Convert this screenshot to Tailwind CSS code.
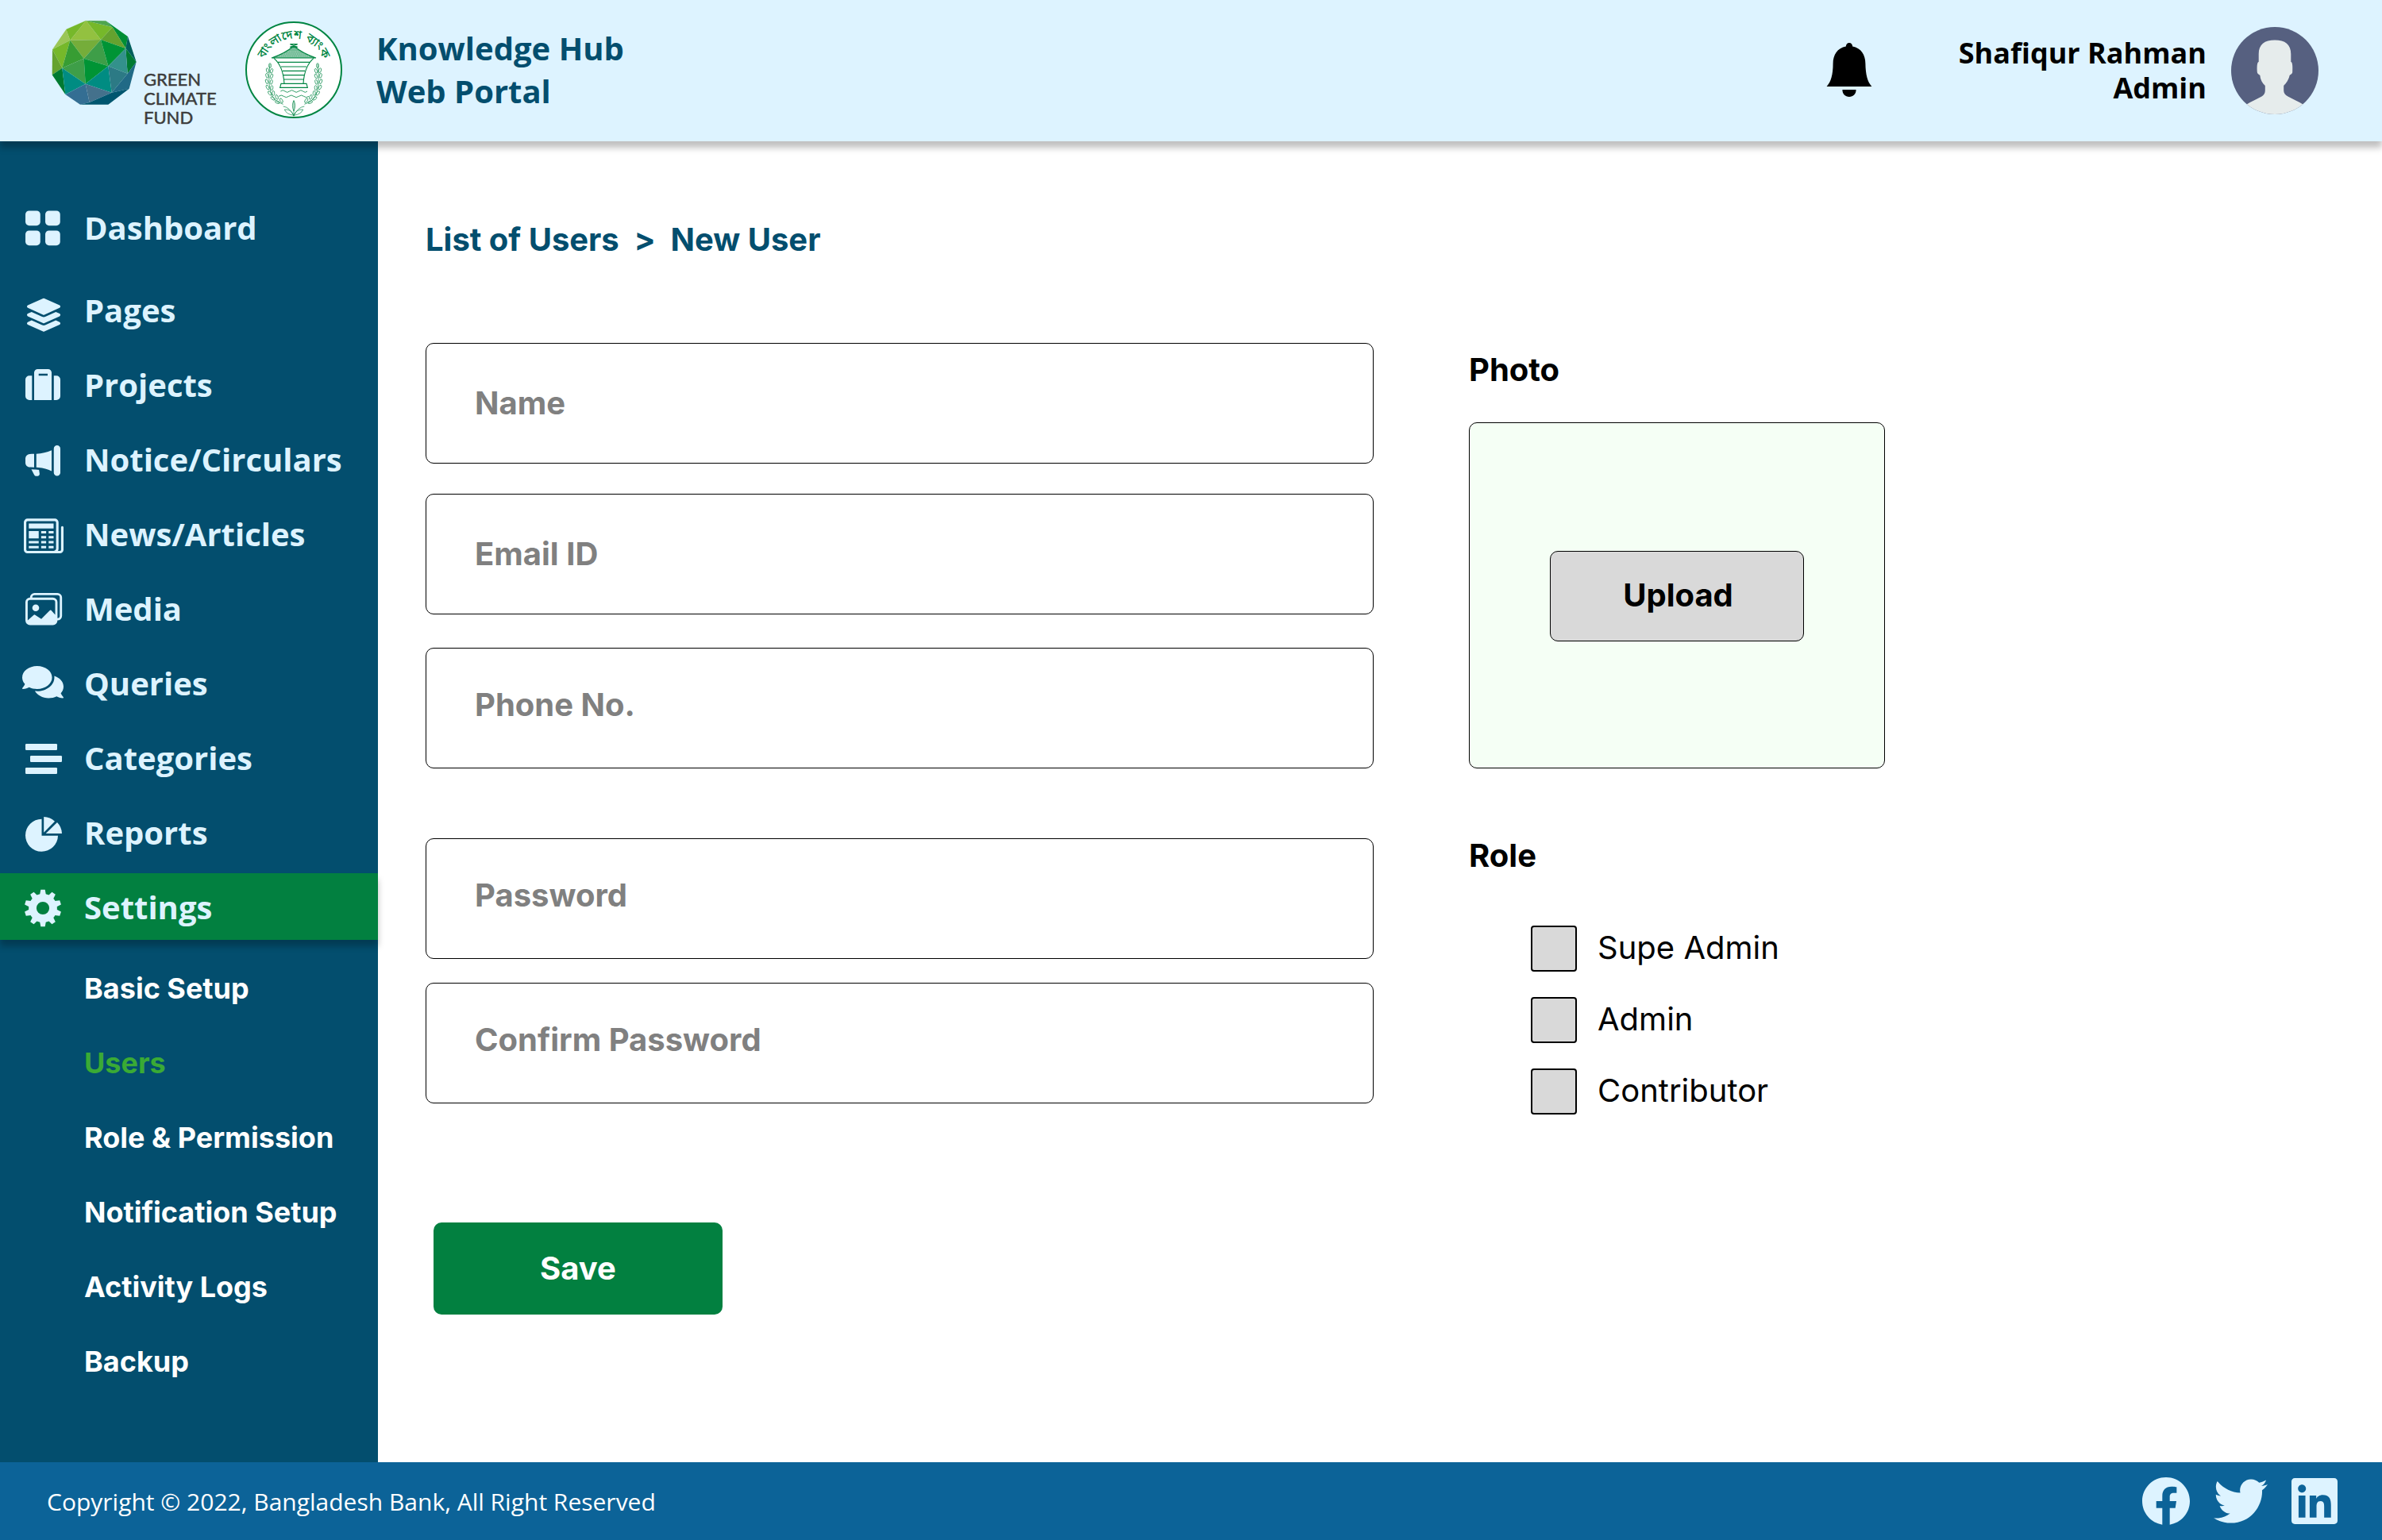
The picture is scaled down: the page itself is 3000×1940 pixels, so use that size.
<!DOCTYPE html>
<html lang="en">
<head>
<meta charset="utf-8">
<title>Knowledge Hub Web Portal</title>
<script src="https://cdn.jsdelivr.net/npm/@tailwindcss/browser@4"></script>
</head>
<body class="w-[3000px] h-[1940px] overflow-hidden bg-white font-['Inter',sans-serif] flex flex-col">

<header class="relative z-20 h-[178px] shrink-0 bg-[#ddf3ff] shadow-[0_8px_8px_rgba(0,0,0,0.25)] flex items-start">
  <!-- Green Climate Fund logo -->
  <div class="flex pl-[65px] pt-[25px] w-[308px]">
    <svg class="w-[108px] h-[108px] shrink-0" viewBox="75 75 324 324">
      <g stroke-width="0.6">
        <path fill="#76b82a" stroke="#76b82a" d="M130 111L205 78L145 152z"/>
        <path fill="#9bc657" d="M78 187L130 111L145 152z"/>
        <path fill="#93c140" d="M145 152L205 78L261 150z"/>
        <path fill="#76b82a" d="M205 78L305 103L261 150z"/>
        <path fill="#4fa54e" d="M205 78L280 79L305 103z"/>
        <path fill="#008e34" d="M280 79L363 138L355 183L305 103z"/>
        <path fill="#65a22f" d="M261 150L305 103L355 183z"/>
        <path fill="#75ad3a" d="M145 152L261 150L197 221z"/>
        <path fill="#76b82a" d="M78 187L145 152L115 257z"/>
        <path fill="#65a22f" d="M78 187L115 257L77 283z"/>
        <path fill="#379d33" d="M145 152L197 221L115 257z"/>
        <path fill="#3e9e48" d="M261 150L289 250L197 221z"/>
        <path fill="#009435" d="M261 150L355 183L289 250z"/>
        <path fill="#005f5c" d="M363 138L395 234L355 183z"/>
        <path fill="#007a31" d="M355 183L395 234L362 278z"/>
        <path fill="#33918b" d="M355 183L362 278L289 250z"/>
        <path fill="#3e9e48" d="M197 221L203 317L115 257z"/>
        <path fill="#009435" d="M197 221L289 250L203 317z"/>
        <path fill="#007a31" d="M115 257L127 357L77 283z"/>
        <path fill="#008c82" d="M115 257L203 317L127 357z"/>
        <path fill="#008c82" d="M289 250L302 350L203 317z"/>
        <path fill="#2c7a85" d="M289 250L362 278L302 350z"/>
        <path fill="#216a86" d="M395 234L368 335L302 350L362 278z"/>
        <path fill="#346e93" d="M127 357L203 317L218 387L183 395z"/>
        <path fill="#44718c" d="M203 317L302 350L218 387z"/>
        <path fill="#00566f" d="M302 350L368 335L289 395L183 395L218 387z"/>
      </g>
    </svg>
    <div class="ml-[8px] mt-[63px] font-['Lato',sans-serif] text-[22px] leading-[24px] text-[#3c3c3b] [-webkit-text-stroke:0.5px_#3c3c3b]">GREEN<br>CLIMATE<br>FUND</div>
  </div>

  <!-- Bangladesh Bank seal -->
  <svg class="w-[124px] h-[124px] mt-[26px] shrink-0" viewBox="804 78 372 372">
    <defs>
      <path id="arc" d="M872 264A118 118 0 0 1 1108 264"/>
      <g id="leaf"><ellipse rx="4.5" ry="9" fill="none" stroke="#008542" stroke-width="2"/></g>
    </defs>
    <circle cx="990" cy="264" r="180" fill="#fff" stroke="#008542" stroke-width="6"/>
    <text fill="#008542" font-size="46" font-weight="500" font-family="'Noto Sans Bengali','Noto Sans',sans-serif"><textPath href="#arc" startOffset="50%" text-anchor="middle" textLength="290" lengthAdjust="spacingAndGlyphs">বাংলাদেশ ব্যাংক</textPath></text>
    <g fill="none" stroke="#008542" stroke-width="3.4">
      <path d="M976 167H1004L976 178H1004L976 167M1004 167L976 178"/>
      <path fill="#008542" fill-opacity=".55" d="M990 174Q955 203 906 219H1074Q1025 203 990 174z"/>
      <path stroke="#fff" stroke-width="1.6" stroke-dasharray="3 4" d="M968 196H1012M950 204H1030M932 212H1048"/>
      <path d="M915 220Q950 250 954 316M1065 220Q1030 250 1026 316"/>
      <path d="M930 235H1050M942 252H1038M948 268H1032M951 284H1029M953 300H1027M942 316H1038L1042 331H938z"/>
      <path stroke-width="2.4" d="M940 345q9 -8 17 0t17 0t17 0t17 0t17 0t16 0M933 364q10 -8 19 0t19 0t19 0t19 0t19 0t19 0"/>
      <path stroke-width="2" d="M900 242Q888 330 912 370Q926 388 950 394M1080 242Q1092 330 1068 370Q1054 388 1030 394M990 380V440M990 438Q975 405 950 402M990 438Q1005 405 1030 402M990 436Q962 432 955 414Q980 412 990 436M990 436Q1018 432 1025 414Q1000 412 990 436M990 420Q980 398 990 380Q1000 398 990 420"/>
    </g>
    <use href="#leaf" transform="translate(900 248)"/><use href="#leaf" transform="translate(891 266) rotate(-15)"/><use href="#leaf" transform="translate(906 268) rotate(20)"/>
    <use href="#leaf" transform="translate(889 286) rotate(-15)"/><use href="#leaf" transform="translate(906 288) rotate(20)"/><use href="#leaf" transform="translate(888 308) rotate(-20)"/><use href="#leaf" transform="translate(905 310) rotate(15)"/>
    <use href="#leaf" transform="translate(891 330) rotate(-25)"/><use href="#leaf" transform="translate(907 332) rotate(5)"/><use href="#leaf" transform="translate(899 352) rotate(-35)"/><use href="#leaf" transform="translate(913 352) rotate(-5)"/>
    <use href="#leaf" transform="translate(911 372) rotate(-55)"/><use href="#leaf" transform="translate(926 367) rotate(-20)"/><use href="#leaf" transform="translate(928 386) rotate(-70)"/><use href="#leaf" transform="translate(943 380) rotate(-30)"/>
    <use href="#leaf" transform="translate(1080 248)"/><use href="#leaf" transform="translate(1089 266) rotate(15)"/><use href="#leaf" transform="translate(1074 268) rotate(-20)"/>
    <use href="#leaf" transform="translate(1091 286) rotate(15)"/><use href="#leaf" transform="translate(1074 288) rotate(-20)"/><use href="#leaf" transform="translate(1092 308) rotate(20)"/><use href="#leaf" transform="translate(1075 310) rotate(-15)"/>
    <use href="#leaf" transform="translate(1089 330) rotate(25)"/><use href="#leaf" transform="translate(1073 332) rotate(-5)"/><use href="#leaf" transform="translate(1081 352) rotate(35)"/><use href="#leaf" transform="translate(1067 352) rotate(5)"/>
    <use href="#leaf" transform="translate(1069 372) rotate(55)"/><use href="#leaf" transform="translate(1054 367) rotate(20)"/><use href="#leaf" transform="translate(1052 386) rotate(70)"/><use href="#leaf" transform="translate(1037 380) rotate(30)"/>
  </svg>

  <h1 class="ml-[42px] mt-[34px] font-['Open_Sans',sans-serif] font-bold text-[40px] leading-[54px] text-[#034e6e] whitespace-nowrap">Knowledge Hub<br>Web Portal</h1>

  <div class="ml-auto flex items-start pr-[80px]">
    <svg class="w-[58px] h-[70px] mt-[53px]" viewBox="0 0 58 70">
      <path d="M29 1C26.500 1 25 3 24.800 5.400C14 7.500 8.600 16 8.600 27C8.600 41 6 50 .6 56H57.400C52 50 49.600 41 49.400 27C49.400 16 44 7.500 33.200 5.400C33 3 31.500 1 29 1zM20.400 60H37.600C37.600 65.500 34 69 29 69S20.400 65.500 20.400 60z"/>
    </svg>
    <div class="ml-[101px] w-[320px] mt-[45px] text-right font-['Open_Sans',sans-serif] font-bold text-[36px] leading-[44px] text-black whitespace-nowrap">Shafiqur Rahman<br>Admin</div>
    <svg class="w-[110px] h-[110px] ml-[31px] mt-[34px]" viewBox="0 0 110 110">
      <defs><clipPath id="av"><circle cx="55" cy="55" r="55"/></clipPath></defs>
      <g clip-path="url(#av)">
        <rect width="110" height="110" fill="#566080"/>
        <path fill="#e6ecec" d="M34.700 44V34C34.700 22 42 16.500 55 16.500S75.300 22 75.300 34V44C77.500 44 77.500 51 77.200 57C76.500 60 74 59.500 73.500 61.500C72 67.500 69 71 66.200 74V80C66.200 83 68 85.500 71.500 87.500C79 91.500 85 94 90.500 97.500L98 110H12L19.500 97.500C25 94 31 91.500 38.500 87.500C41.500 85.500 42.800 83 42.800 80V74C40 71 37 67.500 36.500 61.500C36 59.500 33.500 60 32.800 57C32.300 51 32.500 44 34.700 44z"/>
      </g>
    </svg>
  </div>
</header>

<div class="flex h-[1664px] shrink-0">
  <aside class="relative z-10 w-[476px] shrink-0 bg-[#034e6e] pt-[66px]">
    <nav class="flex flex-col gap-[10px] font-['Open_Sans',sans-serif] font-bold text-[40px] text-[#ddf3ff] whitespace-nowrap">
      <a class="flex items-center h-[84px] mb-[10px]">
        <svg class="w-[106px] h-[84px] shrink-0" viewBox="0 0 106 84" fill="currentColor"><g transform="translate(28.900 18.300) scale(3.125)"><rect x="1" y="1" width="6" height="6" rx="1.500"/><rect x="9" y="1" width="6" height="6" rx="1.500"/><rect x="1" y="9" width="6" height="6" rx="1.500"/><rect x="9" y="9" width="6" height="6" rx="1.500"/></g></svg>
        <span class="mt-[2px]">Dashboard</span>
      </a>
      <a class="flex items-center h-[84px]">
        <svg class="w-[106px] h-[84px] shrink-0" viewBox="0 0 106 84" fill="currentColor"><path transform="translate(34 27.700) scale(.0822)" d="M12.410 148.020l232.940 105.670c6.800 3.090 14.490 3.090 21.290 0l232.940-105.670c16.550-7.510 16.550-32.520 0-40.030L266.650 2.310a25.607 25.607 0 0 0-21.290 0L12.410 107.980c-16.550 7.510-16.550 32.530 0 40.040zm487.180 88.280l-58.090-26.330-161.640 73.270c-7.560 3.430-15.590 5.170-23.860 5.170s-16.290-1.740-23.860-5.170L70.510 209.970l-58.100 26.330c-16.550 7.500-16.550 32.500 0 40l232.940 105.590c6.800 3.080 14.490 3.080 21.290 0L499.590 276.300c16.550-7.500 16.550-32.500 0-40zm0 127.800l-57.870-26.230-161.860 73.370c-7.560 3.430-15.590 5.170-23.860 5.170s-16.290-1.740-23.860-5.170L70.290 337.870 12.410 364.100c-16.550 7.500-16.550 32.500 0 40l232.940 105.590c6.800 3.080 14.490 3.080 21.290 0L499.590 404.100c16.550-7.500 16.550-32.500 0-40z"/></svg>
        <span class="mt-[2px]">Pages</span>
      </a>
      <a class="flex items-center h-[84px]">
        <svg class="w-[106px] h-[84px] shrink-0" viewBox="0 0 106 84" fill="currentColor"><path fill-rule="evenodd" d="M40.300 31.300H37a5 5 0 0 0-5 5V57a5 5 0 0 0 5 5H40.300zM67.800 31.300H71a5 5 0 0 1 5 5V57a5 5 0 0 1-5 5H67.800zM43 62V27.500A4.500 4.500 0 0 1 47.500 23H60.500A4.500 4.500 0 0 1 65 27.500V62zM48.700 28.800V31.300H60V28.800z"/></svg>
        <span class="mt-[2px]">Projects</span>
      </a>
      <a class="flex items-center h-[84px]">
        <svg class="w-[106px] h-[84px] shrink-0" viewBox="0 0 106 84" fill="currentColor"><path transform="translate(32 22.300) scale(2.750)" d="M13 2.500a1.500 1.500 0 0 1 3 0v11a1.500 1.500 0 0 1-3 0v-11zm-1 .724c-2.067.95-4.539 1.481-7 1.656v6.237a25.222 25.222 0 0 1 1.088.085c2.053.204 4.038.668 5.912 1.560V3.224zm-8 7.841V4.934c-.68.027-1.399.043-2.008.053A2.020 2.020 0 0 0 0 7v2c0 1.106.896 1.996 1.994 2.009a68.140 68.140 0 0 1 .496.008 64 64 0 0 1 1.510.048zm1.390 1.081c.285.021.569.047.85.078l.253 1.690a1 1 0 0 1-.983 1.187h-.548a1 1 0 0 1-.916-.599l-1.314-2.480a65.810 65.810 0 0 1 1.692.064c.327.017.65.037.966.06z"/></svg>
        <span class="mt-[2px]">Notice/Circulars</span>
      </a>
      <a class="flex items-center h-[84px]">
        <svg class="w-[106px] h-[84px] shrink-0" viewBox="0 0 106 84" fill="currentColor"><g transform="translate(30 20.200) scale(3.125)"><path d="M0 2.500A1.500 1.500 0 0 1 1.500 1h11A1.500 1.500 0 0 1 14 2.500v10.528c0 .3-.05.654-.238.972h.738a.5.5 0 0 0 .5-.5v-9a.5.5 0 0 1 1 0v9a1.500 1.500 0 0 1-1.500 1.500H1.497A1.497 1.497 0 0 1 0 13.500v-11zM12 14c.37 0 .654-.211.853-.441.092-.106.147-.279.147-.531V2.500a.5.5 0 0 0-.5-.5h-11a.5.5 0 0 0-.5.5v11c0 .278.223.5.497.5H12z"/><path d="M2 3h10v2H2V3zm0 3h4v3H2V6zm0 4h4v1H2v-1zm0 2h4v1H2v-1zm5-6h2v1H7V6zm3 0h2v1h-2V6zM7 8h2v1H7V8zm3 0h2v1h-2V8zm-3 2h2v1H7v-1zm3 0h2v1h-2v-1zm-3 2h2v1H7v-1zm3 0h2v1h-2v-1z"/></g></svg>
        <span class="mt-[2px]">News/Articles</span>
      </a>
      <a class="flex items-center h-[84px]">
        <svg class="w-[106px] h-[84px] shrink-0" viewBox="0 0 106 84" fill="currentColor"><g transform="translate(32 20.100) scale(2.885)"><path d="M4.502 9a1.500 1.500 0 1 0 0-3 1.500 1.500 0 0 0 0 3z"/><path d="M14.002 13a2 2 0 0 1-2 2h-10a2 2 0 0 1-2-2V5A2 2 0 0 1 2 3a2 2 0 0 1 2-2h10a2 2 0 0 1 2 2v8a2 2 0 0 1-1.998 2zM14 2H4a1 1 0 0 0-1 1h9.002a2 2 0 0 1 2 2v7A1 1 0 0 0 15 11V3a1 1 0 0 0-1-1zM2.002 4a1 1 0 0 0-1 1v8l2.646-2.354a.5.5 0 0 1 .63-.062l2.660 1.773 3.710-3.710a.5.5 0 0 1 .577-.094l1.777 1.947V5a1 1 0 0 0-1-1h-10z"/></g></svg>
        <span class="mt-[2px]">Media</span>
      </a>
      <a class="flex items-center h-[84px]">
        <svg class="w-[106px] h-[84px] shrink-0" viewBox="0 0 106 84" fill="currentColor"><path transform="translate(28 18.100) scale(.0903)" d="M416 192c0-88.400-93.100-160-208-160S0 103.600 0 192c0 34.300 14.100 65.900 38 92-13.400 30.200-35.500 54.200-35.800 54.500-2.200 2.300-2.800 5.700-1.500 8.700S4.800 352 8 352c36.600 0 66.900-12.300 88.700-25 32.200 15.700 70.300 25 111.300 25 114.900 0 208-71.600 208-160zm122 220c23.900-26 38-57.700 38-92 0-66.900-53.500-124.200-129.300-148.100.9 6.600 1.300 13.300 1.300 20.100 0 105.900-107.700 192-240 192-10.800 0-21.300-.8-31.700-1.900C207.800 439.600 281.800 480 368 480c41 0 79.100-9.200 111.300-25 21.800 12.700 52.100 25 88.700 25 3.200 0 6.100-1.900 7.300-4.800 1.300-2.900.7-6.300-1.500-8.700-.3-.2-22.400-24.200-35.800-54.500z"/></svg>
        <span class="mt-[2px]">Queries</span>
      </a>
      <a class="flex items-center h-[84px]">
        <svg class="w-[106px] h-[84px] shrink-0" viewBox="0 0 106 84" fill="currentColor"><rect x="32" y="25" width="40" height="8" rx="1.200"/><rect x="38" y="40" width="40" height="8" rx="1.200"/><rect x="32" y="55" width="40" height="8" rx="1.200"/></svg>
        <span class="mt-[2px]">Categories</span>
      </a>
      <a class="flex items-center h-[84px]">
        <svg class="w-[106px] h-[84px] shrink-0" viewBox="0 0 106 84" fill="currentColor"><path d="M52.500 25.800A20.500 20.500 0 1 0 73 46.700H52.500zM55.200 23A21 21 0 0 1 69 28.700L55.200 42.700zM72 30A21 21 0 0 1 78 44H57.700z"/></svg>
        <span class="mt-[2px]">Reports</span>
      </a>
      <a class="flex items-center h-[84px] bg-[#028040] shadow-[0_8px_8px_rgba(0,0,0,0.25)]">
        <svg class="w-[106px] h-[84px] shrink-0" viewBox="0 0 106 84" fill="currentColor">
          <defs><path id="tooth" d="M-2.700 -23.200H2.700L4.200 -15H-4.200z"/></defs>
          <g transform="translate(54 44)">
            <circle r="13" fill="none" stroke="currentColor" stroke-width="9.800"/>
            <use href="#tooth"/><use href="#tooth" transform="rotate(36)"/><use href="#tooth" transform="rotate(72)"/><use href="#tooth" transform="rotate(108)"/><use href="#tooth" transform="rotate(144)"/><use href="#tooth" transform="rotate(180)"/><use href="#tooth" transform="rotate(216)"/><use href="#tooth" transform="rotate(252)"/><use href="#tooth" transform="rotate(288)"/><use href="#tooth" transform="rotate(324)"/>
          </g>
        </svg>
        <span class="mt-[2px]">Settings</span>
      </a>
    </nav>
    <nav class="mt-[14px] pl-[106px] font-bold text-[36px] leading-[94px] text-white whitespace-nowrap flex flex-col">
      <a>Basic Setup</a>
      <a class="text-[#3aaa35]">Users</a>
      <a>Role &amp; Permission</a>
      <a>Notification Setup</a>
      <a>Activity Logs</a>
      <a>Backup</a>
    </nav>
  </aside>

  <main class="flex-1 pl-[60px] pt-[100px]">
    <div class="h-[48px] font-bold text-[40px] leading-[48px] text-[#034e6e] whitespace-pre tracking-[-0.03px]">List of Users  &gt;  New User</div>
    <div class="flex mt-[106px]">
      <form class="w-[1194px] flex flex-col font-bold text-[40px] text-[#808080]">
        <div class="h-[152px] border border-black rounded-[10px] pl-[61px] flex items-center">Name</div>
        <div class="h-[152px] mt-[38px] border border-black rounded-[10px] pl-[61px] flex items-center">Email ID</div>
        <div class="h-[152px] mt-[42px] border border-black rounded-[10px] pl-[61px] pb-[8px] flex items-center">Phone No.</div>
        <div class="h-[152px] mt-[88px] border border-black rounded-[10px] pl-[61px] pb-[8px] flex items-center">Password</div>
        <div class="h-[152px] mt-[30px] border border-black rounded-[10px] pl-[61px] pb-[8px] flex items-center">Confirm Password</div>
        <button type="button" class="ml-[10px] mt-[150px] w-[364px] h-[116px] rounded-[10px] bg-[#028040] text-white font-bold">Save</button>
      </form>
      <section class="ml-[120px] w-[524px] text-[40px] leading-[48px] text-black">
        <h2 class="mt-[10px] font-bold">Photo</h2>
        <div class="mt-[42px] h-[436px] border border-black rounded-[10px] bg-[#f5fff5] flex justify-center pt-[161px]">
          <button type="button" class="w-[320px] h-[114px] border border-black rounded-[10px] bg-[#d9d9d9] pb-[3px] pl-[3px] font-bold">Upload</button>
        </div>
        <h2 class="mt-[86px] font-bold">Role</h2>
        <div class="mt-[64px] ml-[78px] flex flex-col gap-[32px]">
          <label class="flex items-center h-[58px]"><span class="w-[58px] h-[58px] border-2 border-black rounded-[4px] bg-[#d9d9d9]"></span><span class="ml-[26px] mb-[3px]">Supe Admin</span></label>
          <label class="flex items-center h-[58px]"><span class="w-[58px] h-[58px] border-2 border-black rounded-[4px] bg-[#d9d9d9]"></span><span class="ml-[26px] mb-[3px]">Admin</span></label>
          <label class="flex items-center h-[58px]"><span class="w-[58px] h-[58px] border-2 border-black rounded-[4px] bg-[#d9d9d9]"></span><span class="ml-[26px] mb-[3px]">Contributor</span></label>
        </div>
      </section>
    </div>
  </main>
</div>

<footer class="relative z-20 h-[98px] shrink-0 bg-[#0c6398] flex items-center pl-[59px] pr-[56px]">
  <p class="font-['Open_Sans',sans-serif] text-[30px] text-white whitespace-nowrap">Copyright © 2022, Bangladesh Bank, All Right Reserved</p>
  <div class="ml-auto flex items-center text-[#ddf3ff]">
    <svg class="w-[60px] h-[60px]" viewBox="8 8 496 496" fill="currentColor"><path d="M504 256C504 119 393 8 256 8S8 119 8 256c0 123.780 90.690 226.380 209.250 245V327.690h-63V256h63v-54.640c0-62.150 37-96.480 93.670-96.480 27.140 0 55.520 4.840 55.520 4.840v61h-31.280c-30.800 0-40.410 19.120-40.410 38.730V256h68.780l-11 71.690h-57.780V501C413.310 482.380 504 379.780 504 256z"/></svg>
    <svg class="ml-[30px] w-[68px] h-[56px]" viewBox="0 48 512 416" fill="currentColor"><path d="M459.370 151.716c.325 4.548.325 9.097.325 13.645 0 138.720-105.583 298.558-298.558 298.558-59.452 0-114.680-17.219-161.137-47.106 8.447.974 16.568 1.299 25.340 1.299 49.055 0 94.213-16.568 130.274-44.832-46.132-.975-84.792-31.188-98.112-72.772 6.498.974 12.995 1.624 19.818 1.624 9.421 0 18.843-1.300 27.614-3.573-48.081-9.747-84.143-51.980-84.143-102.985v-1.299c13.969 7.797 30.214 12.670 47.431 13.319-28.264-18.843-46.781-51.005-46.781-87.391 0-19.492 5.197-37.360 14.294-52.954 51.655 63.675 129.300 105.258 216.365 109.807-1.624-7.797-2.599-15.918-2.599-24.040 0-57.828 46.782-104.934 104.934-104.934 30.213 0 57.502 12.670 76.670 33.137 23.715-4.548 46.456-13.320 66.599-25.340-7.798 24.366-24.366 44.833-46.132 57.827 21.117-2.273 41.584-8.122 60.426-16.243-14.292 20.791-32.161 39.308-52.628 54.253z"/></svg>
    <svg class="ml-[30px] w-[58px] h-[58px]" viewBox="0 32 448 448" fill="currentColor"><path d="M416 32H31.900C14.300 32 0 46.500 0 64.300v383.400C0 465.500 14.300 480 31.900 480H416c17.600 0 32-14.500 32-32.300V64.300c0-17.800-14.400-32.300-32-32.300zM135.400 416H69V202.200h66.500V416zm-33.200-243c-21.300 0-38.500-17.300-38.500-38.500S80.900 96 102.200 96c21.200 0 38.500 17.300 38.500 38.500 0 21.300-17.200 38.500-38.500 38.500zm282.100 243h-66.400V312c0-24.800-.5-56.700-34.500-56.700-34.600 0-39.900 27-39.900 54.900V416h-66.400V202.200h63.700v29.200h.9c8.900-16.800 30.600-34.500 62.900-34.500 67.200 0 79.700 44.300 79.700 101.900V416z"/></svg>
  </div>
</footer>
</body>
</html>
